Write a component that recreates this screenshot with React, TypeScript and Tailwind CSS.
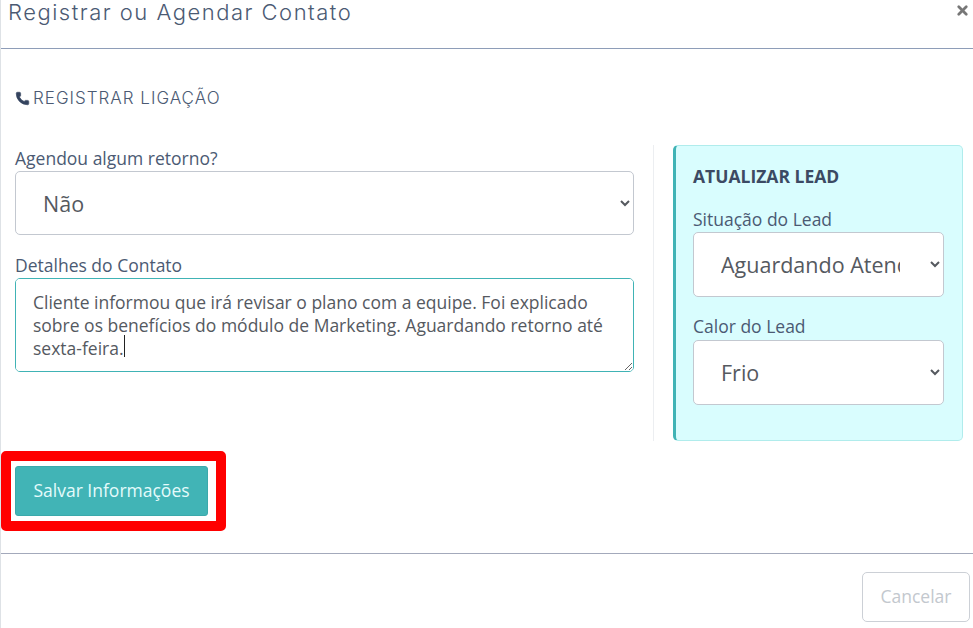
import { Phone, X } from 'lucide-react';

const labelClass = 'block text-[17.5px] leading-[25px] text-[#4b5a73]';
const selectClass =
  'block w-full rounded-[5px] border border-[#c3c8d0] bg-white text-[21.5px] text-[#55595f] outline-none';

export default function App() {
  return (
    <div className="flex h-[628px] w-[973px] flex-col overflow-hidden border-l border-[#dee2e6] bg-white font-['Open_Sans',sans-serif]">
      <header className="flex h-[49px] shrink-0 justify-between border-b border-[#8e9db8] pl-[7px] pr-[3px]">
        <h1 className="font-['Inter',sans-serif] text-[22px] font-light leading-[24px] tracking-[1.5px] text-[#4b5a73]">
          Registrar ou Agendar Contato
        </h1>
        <X size={15} strokeWidth={4.5} className="mt-[3px] text-[#777]" />
      </header>

      <main className="flex flex-1 flex-col pl-[14px] pr-[9px]">
        <div className="mt-[39px] flex items-center gap-[3px] font-['Inter',sans-serif] text-[17px] font-light leading-5 tracking-[1px] text-[#4b5a73]">
          <Phone size={15} fill="currentColor" strokeWidth={1} className="text-[#34435e]" />
          REGISTRAR LIGAÇÃO
        </div>

        <div className="mt-[37px] flex">
          <section className="h-[296px] w-[639px] shrink-0 border-r border-[#eceef1] pr-[19px] pt-[1px]">
            <label className={labelClass}>Agendou algum retorno?</label>
            <select defaultValue="nao" className={`${selectClass} h-[64px] pl-[23px] pr-[27px]`}>
              <option value="nao">Não</option>
              <option value="sim">Sim</option>
            </select>

            <label className={`${labelClass} mt-[18px]`}>Detalhes do Contato</label>
            <div className="relative">
              <textarea
                defaultValue="Cliente informou que irá revisar o plano com a equipe. Foi explicado sobre os benefícios do módulo de Marketing. Aguardando retorno até sexta-feira."
                className="block h-[94px] w-full rounded-[5px] border border-[#40b3b5] bg-white py-[12px] pl-[17px] pr-[17px] text-[17.5px] leading-[23px] text-[#55595f] outline-none"
              />
              <span className="absolute left-[109px] top-[57px] h-[22px] w-px bg-[#222]" />
            </div>
          </section>

          <aside className="ml-[19px] h-[296px] w-[290px] rounded-[5px] border border-l-[3px] border-[#b0ecec] border-l-[#40b3b5] bg-[#d9fdfe] pl-[17px] pr-[18px] pt-[19px]">
            <h2 className="text-[17.5px] font-bold leading-[22px] text-[#3c4a63]">ATUALIZAR LEAD</h2>
            <label className={`${labelClass} mt-[20px]`}>Situação do Lead</label>
            <select defaultValue="a" className={`${selectClass} h-[65px] pl-[23px] pr-[27px]`}>
              <option value="a">Aguardando Atendimento</option>
            </select>
            <label className={`${labelClass} mb-px mt-[17px]`}>Calor do Lead</label>
            <select defaultValue="f" className={`${selectClass} h-[65px] pl-[23px] pr-[27px]`}>
              <option value="f">Frio</option>
            </select>
          </aside>
        </div>

        <div className="relative mt-[25px]">
          <button
            type="button"
            className="h-[50px] w-[193px] rounded-[3px] border border-[#3ba9ab] bg-[#41b4b6] pb-[2px] text-[17.5px] text-[#e4fbfb]"
          >
            Salvar Informações
          </button>
          {/* destaque vermelho do tutorial */}
          <div className="pointer-events-none absolute left-[-14px] top-[-15px] h-[80px] w-[225px] rounded-[5px] border-[10px] border-[#ff0000]" />
        </div>
      </main>

      <footer className="flex h-[75px] shrink-0 items-start justify-end border-t border-[#a3a9bb] pr-[3px] pt-[18px]">
        <button
          type="button"
          className="h-[50px] w-[108px] rounded-[5px] border border-[#ccd0d6] bg-white pb-[2px] text-[17.5px] text-[#c3c8ce]"
        >
          Cancelar
        </button>
      </footer>
    </div>
  );
}
